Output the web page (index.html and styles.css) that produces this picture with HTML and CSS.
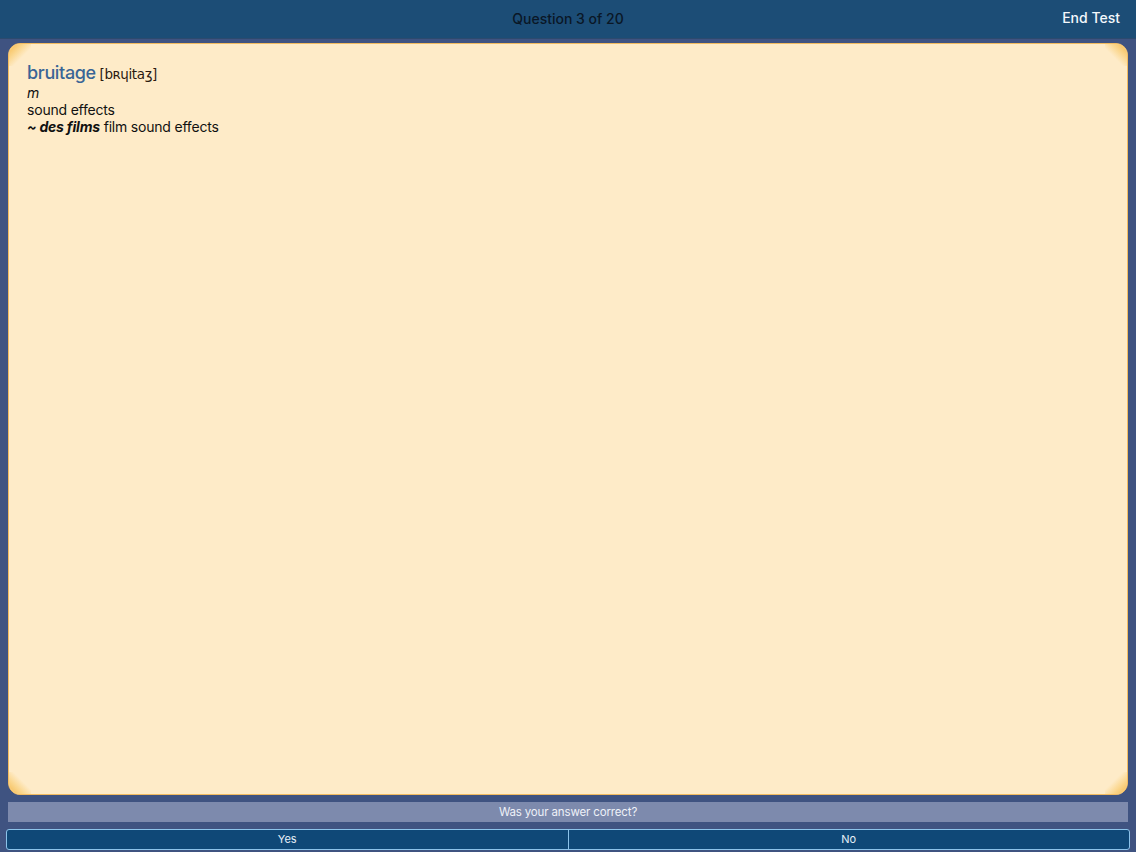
FILE: index.html
```html
<!DOCTYPE html>
<html>
<head>
<meta charset="utf-8">
<link rel="stylesheet" href="styles.css">
</head>
<body>
<div class="app">
  <header class="topbar">
    <div class="title">Question 3 of 20</div>
    <div class="end">End Test</div>
  </header>
  <main class="card">
    <span class="curl tl"></span><span class="curl tr"></span><span class="curl bl"></span><span class="curl br"></span>
    <div class="entry">
      <div class="head"><span class="word">bruitage</span> <span class="ipa">[bʀɥitaʒ]</span></div>
      <div class="pos">m</div>
      <div>sound effects</div>
      <div><b><i>~ des films</i></b> film sound effects</div>
    </div>
  </main>
  <div class="prompt">Was your answer correct?</div>
  <div class="buttons">
    <div class="btn">Yes</div>
    <div class="btn">No</div>
  </div>
</div>
</body>
</html>
```
FILE: styles.css
```css
html, body { margin: 0; padding: 0; }
body {
  width: 1136px; height: 852px; overflow: hidden;
  background: #3f5381;
  font-family: "Liberation Sans", Arial, sans-serif;
}
.app { display: flex; flex-direction: column; height: 852px; }
.topbar {
  height: 38px; background: #1c4d76;
  display: flex; align-items: center; justify-content: center;
  position: relative;
  border-bottom: 1px solid #2d4a6e;
}
.title { font-family: Inter, "Liberation Sans", sans-serif; font-size: 14px; font-weight: 500; color: #0a1726; margin-top: -2px; }
.end {
  position: absolute; right: 16px; top: 9px;
  font-family: Inter, "Liberation Sans", sans-serif; font-size: 14px; font-weight: 500; color: #f4f8fc;
}
.card {
  margin: 4px 8px 0 8px; height: 752px;
  background: #feebc8;
  border: 1px solid #f2bb60;
  border-radius: 12px;
  position: relative; overflow: hidden;
  box-sizing: border-box;
}
.curl { position: absolute; width: 22px; height: 22px; }
.tl { left: 0; top: 0; background: linear-gradient(135deg, #f5b94c 0%, #fbd892 35%, rgba(254,235,200,0) 60%); }
.tr { right: 0; top: 0; background: linear-gradient(225deg, #f5b94c 0%, #fbd892 35%, rgba(254,235,200,0) 60%); }
.bl { left: 0; bottom: 0; background: linear-gradient(45deg, #f5b94c 0%, #fbd892 35%, rgba(254,235,200,0) 60%); }
.br { right: 0; bottom: 0; background: linear-gradient(315deg, #f5b94c 0%, #fbd892 35%, rgba(254,235,200,0) 60%); }
.entry {
  padding: 18px 0 0 18px;
  font-size: 14px; line-height: 17px; color: #111;
  letter-spacing: -0.2px;
  font-family: Inter, "Liberation Sans", sans-serif;
}
.head { line-height: 22px; margin-bottom: -1px; }
.word { font-size: 18px; font-weight: 500; color: #3a6596; letter-spacing: -0.35px; }
.ipa { font-size: 13.5px; color: #2a1a10; font-family: "DejaVu Sans", sans-serif; letter-spacing: -0.4px; }
.pos { font-style: italic; }
.prompt {
  margin: 7px 8px 0 8px; height: 20px;
  background: #7d8aad;
  color: #eef1f8; font-size: 11.5px; line-height: 20px; text-align: center;
  letter-spacing: -0.15px;
  font-family: Inter, "Liberation Sans", sans-serif;
}
.buttons {
  margin: 7px 6px 0 6px; height: 21px;
  box-sizing: border-box;
  display: flex;
  border: 1px solid #8cc3ea; border-radius: 3px;
  background: #0f4877;
}
.btn {
  flex: 1; text-align: center; color: #e8f0f8;
  font-size: 11px; line-height: 19px;
  font-family: Inter, "Liberation Sans", sans-serif;
}
.btn + .btn { border-left: 1px solid #8cc3ea; }
```
